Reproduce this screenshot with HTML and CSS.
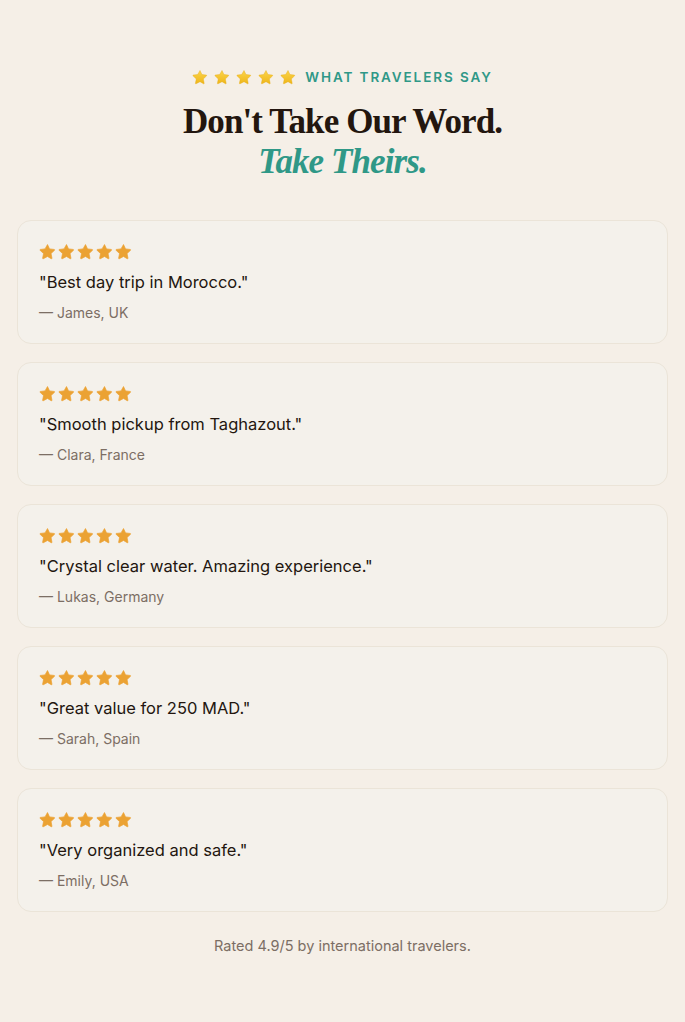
FILE: index.html
```html
<!DOCTYPE html>
<html lang="en">
<head>
<meta charset="utf-8">
<title>What Travelers Say</title>
<link rel="stylesheet" href="styles.css">
</head>
<body>
<svg width="0" height="0" class="defs" aria-hidden="true">
  <defs>
    <symbol id="star" viewBox="0 0 24 24">
      <path d="M12 2.2l2.9 6.1 6.6.8c.6.1.8.8.4 1.2l-4.9 4.6 1.3 6.6c.1.6-.5 1-1 .7L12 19l-5.9 3.2c-.5.3-1.1-.1-1-.7l1.3-6.6-4.9-4.6c-.4-.4-.2-1.1.4-1.2l6.6-.8z" stroke-linejoin="round"/>
    </symbol>
    <linearGradient id="gold" x1="0" y1="0" x2="0" y2="1">
      <stop offset="0" stop-color="#fbd44a"/>
      <stop offset="1" stop-color="#eeb61a"/>
    </linearGradient>
  </defs>
</svg>
<main class="section">
  <header class="head">
    <div class="eyebrow">
      <span class="gold-stars">
        <svg class="gstar"><use href="#star"/></svg>
        <svg class="gstar"><use href="#star"/></svg>
        <svg class="gstar"><use href="#star"/></svg>
        <svg class="gstar"><use href="#star"/></svg>
        <svg class="gstar"><use href="#star"/></svg>
      </span>
      <span class="eyebrow-text">WHAT TRAVELERS SAY</span>
    </div>
    <h1 class="title">Don't Take Our Word.<br><em>Take Theirs.</em></h1>
  </header>

  <div class="list">
    <article class="card">
      <div class="stars"><svg><use href="#star"/></svg><svg><use href="#star"/></svg><svg><use href="#star"/></svg><svg><use href="#star"/></svg><svg><use href="#star"/></svg></div>
      <p class="quote">"Best day trip in Morocco."</p>
      <p class="author">— James, UK</p>
    </article>
    <article class="card">
      <div class="stars"><svg><use href="#star"/></svg><svg><use href="#star"/></svg><svg><use href="#star"/></svg><svg><use href="#star"/></svg><svg><use href="#star"/></svg></div>
      <p class="quote">"Smooth pickup from Taghazout."</p>
      <p class="author">— Clara, France</p>
    </article>
    <article class="card">
      <div class="stars"><svg><use href="#star"/></svg><svg><use href="#star"/></svg><svg><use href="#star"/></svg><svg><use href="#star"/></svg><svg><use href="#star"/></svg></div>
      <p class="quote">"Crystal clear water. Amazing experience."</p>
      <p class="author">— Lukas, Germany</p>
    </article>
    <article class="card">
      <div class="stars"><svg><use href="#star"/></svg><svg><use href="#star"/></svg><svg><use href="#star"/></svg><svg><use href="#star"/></svg><svg><use href="#star"/></svg></div>
      <p class="quote">"Great value for 250 MAD."</p>
      <p class="author">— Sarah, Spain</p>
    </article>
    <article class="card">
      <div class="stars"><svg><use href="#star"/></svg><svg><use href="#star"/></svg><svg><use href="#star"/></svg><svg><use href="#star"/></svg><svg><use href="#star"/></svg></div>
      <p class="quote">"Very organized and safe."</p>
      <p class="author">— Emily, USA</p>
    </article>
  </div>

  <p class="foot">Rated 4.9/5 by international travelers.</p>
</main>
</body>
</html>
```

FILE: styles.css
```css
* { box-sizing: border-box; }
html, body { margin: 0; padding: 0; }
body {
  background: #f5efe7;
  font-family: Inter, "Noto Sans", sans-serif;
  color: #2a1d16;
}
.defs { position: absolute; width: 0; height: 0; overflow: hidden; }
.section {
  padding: 66px 17px 66px 17px;
}
.head { text-align: center; }
.eyebrow {
  display: flex;
  justify-content: center;
  align-items: center;
  gap: 9px;
  height: 22px;
}
.gold-stars { display: flex; gap: 6px; }
.gstar { width: 16px; height: 16px; fill: url(#gold); stroke: #e6aa12; stroke-width: 0.6; }
.eyebrow-text {
  color: #2f9887;
  font-weight: 600;
  font-size: 13.5px;
  letter-spacing: 1.9px;
}
.title {
  margin: 14px 0 0;
  font-family: "Liberation Serif", "DejaVu Serif", serif;
  font-weight: 700;
  font-size: 35px;
  line-height: 40px;
  letter-spacing: -0.9px;
  color: #23160f;
}
.title em {
  color: #2f9887;
  font-style: italic;
}
.list {
  margin-top: 38px;
  display: flex;
  flex-direction: column;
  gap: 18px;
}
.card {
  background: #f4f1eb;
  border: 1px solid #ebe4d8;
  border-radius: 14px;
  padding: 22px 20px 20px 21px;
}
.stars { display: flex; gap: 2px; height: 18px; }
.stars svg { width: 17px; height: 17px; fill: #eba233; stroke: #eba233; stroke-width: 1; }
.quote {
  margin: 9px 0 0;
  font-size: 16.5px;
  line-height: 24px;
  color: #23160f;
}
.author {
  margin: 9px 0 0;
  font-size: 14px;
  line-height: 20px;
  color: #7c6e64;
}
.foot {
  margin: 25px 0 0;
  text-align: center;
  font-size: 14.5px;
  color: #7c6e64;
}
```
